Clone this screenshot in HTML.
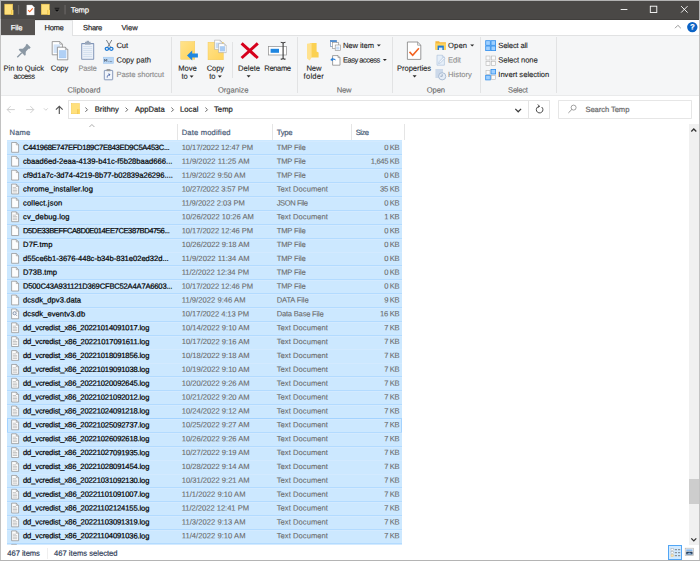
<!DOCTYPE html>
<html lang="en"><head><meta charset="utf-8"><title>Temp</title>
<style>
html,body{margin:0;padding:0;background:#fff;}
body{width:700px;height:561px;overflow:hidden;position:relative;font-family:"Liberation Sans", sans-serif;font-size:7.6px;}
#win{position:absolute;left:0;top:0;width:700px;height:561px;overflow:hidden;background:#fff;}
#win div,#win svg,#win span{position:absolute;}
#win span{white-space:nowrap;line-height:10px;height:10px;transform-origin:0 50%;-webkit-text-stroke:0.22px;}
#win svg{overflow:visible;}
</style></head><body><div id="win">
<div style="left:0.00px;top:0.00px;width:700.00px;height:561.00px;background:#fff;"></div>
<div style="left:0.00px;top:0.00px;width:700.00px;height:19.40px;background:#4a4846;"></div>
<div style="left:0.00px;top:0.00px;width:700.00px;height:1.00px;background:#b2b2b2;"></div>
<div style="left:0.00px;top:18.60px;width:700.00px;height:0.80px;background:#403e3c;"></div>
<div style="left:0.00px;top:19.40px;width:34.70px;height:15.60px;background:#555250;"></div>
<div style="left:0.00px;top:35.00px;width:700.00px;height:60.30px;background:#f5f6f7;"></div>
<div style="left:0.00px;top:34.70px;width:700.00px;height:0.70px;background:#e1e2e3;"></div>
<div style="left:0.00px;top:95.00px;width:700.00px;height:0.70px;background:#e9eaeb;"></div>
<div style="left:34.70px;top:19.90px;width:38.30px;height:15.90px;background:#f5f6f7;box-sizing:border-box;border:0.7px solid #e1e2e3;border-bottom:none;border-left:none;"></div>
<div style="left:171.05px;top:37.20px;width:0.70px;height:56.20px;background:#e2e3e4;"></div>
<div style="left:297.05px;top:37.20px;width:0.70px;height:56.20px;background:#e2e3e4;"></div>
<div style="left:392.25px;top:37.20px;width:0.70px;height:56.20px;background:#e2e3e4;"></div>
<div style="left:480.05px;top:37.20px;width:0.70px;height:56.20px;background:#e2e3e4;"></div>
<div style="left:556.35px;top:37.20px;width:0.70px;height:56.20px;background:#e2e3e4;"></div>
<div style="left:232.10px;top:42.00px;width:0.70px;height:36.00px;background:#e2e3e4;"></div>
<div style="left:68.30px;top:99.70px;width:481.60px;height:19.70px;background:#fff;box-sizing:border-box;border:0.8px solid #e4e4e4;"></div>
<div style="left:528.00px;top:99.70px;width:0.80px;height:19.70px;background:#e4e4e4;"></div>
<div style="left:558.30px;top:99.70px;width:133.60px;height:19.70px;background:#fff;box-sizing:border-box;border:0.8px solid #e6e6e6;border-radius:0.8px;"></div>
<div style="left:177.05px;top:124.30px;width:0.70px;height:15.80px;background:#e5e5e5;"></div>
<div style="left:272.05px;top:124.30px;width:0.70px;height:15.80px;background:#e5e5e5;"></div>
<div style="left:351.05px;top:124.30px;width:0.70px;height:15.80px;background:#e5e5e5;"></div>
<div style="left:403.95px;top:124.30px;width:0.70px;height:15.80px;background:#e5e5e5;"></div>
<div style="left:7.30px;top:140.40px;width:394.60px;height:404.60px;background:#cce8ff;"></div>
<div style="left:7.30px;top:140.60px;width:394.60px;height:0.80px;background:#b3dbff;"></div>
<div style="left:7.30px;top:141.40px;width:394.60px;height:0.60px;background:#d3eaff;"></div>
<div style="left:7.30px;top:154.47px;width:394.60px;height:0.80px;background:#b3dbff;"></div>
<div style="left:7.30px;top:155.27px;width:394.60px;height:0.60px;background:#d3eaff;"></div>
<div style="left:7.30px;top:168.34px;width:394.60px;height:0.80px;background:#b3dbff;"></div>
<div style="left:7.30px;top:169.14px;width:394.60px;height:0.60px;background:#d3eaff;"></div>
<div style="left:7.30px;top:182.22px;width:394.60px;height:0.80px;background:#b3dbff;"></div>
<div style="left:7.30px;top:183.02px;width:394.60px;height:0.60px;background:#d3eaff;"></div>
<div style="left:7.30px;top:196.09px;width:394.60px;height:0.80px;background:#b3dbff;"></div>
<div style="left:7.30px;top:196.89px;width:394.60px;height:0.60px;background:#d3eaff;"></div>
<div style="left:7.30px;top:209.96px;width:394.60px;height:0.80px;background:#b3dbff;"></div>
<div style="left:7.30px;top:210.76px;width:394.60px;height:0.60px;background:#d3eaff;"></div>
<div style="left:7.30px;top:223.83px;width:394.60px;height:0.80px;background:#b3dbff;"></div>
<div style="left:7.30px;top:224.63px;width:394.60px;height:0.60px;background:#d3eaff;"></div>
<div style="left:7.30px;top:237.70px;width:394.60px;height:0.80px;background:#b3dbff;"></div>
<div style="left:7.30px;top:238.50px;width:394.60px;height:0.60px;background:#d3eaff;"></div>
<div style="left:7.30px;top:251.58px;width:394.60px;height:0.80px;background:#b3dbff;"></div>
<div style="left:7.30px;top:252.38px;width:394.60px;height:0.60px;background:#d3eaff;"></div>
<div style="left:7.30px;top:265.45px;width:394.60px;height:0.80px;background:#b3dbff;"></div>
<div style="left:7.30px;top:266.25px;width:394.60px;height:0.60px;background:#d3eaff;"></div>
<div style="left:7.30px;top:279.32px;width:394.60px;height:0.80px;background:#b3dbff;"></div>
<div style="left:7.30px;top:280.12px;width:394.60px;height:0.60px;background:#d3eaff;"></div>
<div style="left:7.30px;top:293.19px;width:394.60px;height:0.80px;background:#b3dbff;"></div>
<div style="left:7.30px;top:293.99px;width:394.60px;height:0.60px;background:#d3eaff;"></div>
<div style="left:7.30px;top:307.06px;width:394.60px;height:0.80px;background:#b3dbff;"></div>
<div style="left:7.30px;top:307.86px;width:394.60px;height:0.60px;background:#d3eaff;"></div>
<div style="left:7.30px;top:320.94px;width:394.60px;height:0.80px;background:#b3dbff;"></div>
<div style="left:7.30px;top:321.74px;width:394.60px;height:0.60px;background:#d3eaff;"></div>
<div style="left:7.30px;top:334.81px;width:394.60px;height:0.80px;background:#b3dbff;"></div>
<div style="left:7.30px;top:335.61px;width:394.60px;height:0.60px;background:#d3eaff;"></div>
<div style="left:7.30px;top:348.68px;width:394.60px;height:0.80px;background:#b3dbff;"></div>
<div style="left:7.30px;top:349.48px;width:394.60px;height:0.60px;background:#d3eaff;"></div>
<div style="left:7.30px;top:362.55px;width:394.60px;height:0.80px;background:#b3dbff;"></div>
<div style="left:7.30px;top:363.35px;width:394.60px;height:0.60px;background:#d3eaff;"></div>
<div style="left:7.30px;top:376.42px;width:394.60px;height:0.80px;background:#b3dbff;"></div>
<div style="left:7.30px;top:377.22px;width:394.60px;height:0.60px;background:#d3eaff;"></div>
<div style="left:7.30px;top:390.30px;width:394.60px;height:0.80px;background:#b3dbff;"></div>
<div style="left:7.30px;top:391.10px;width:394.60px;height:0.60px;background:#d3eaff;"></div>
<div style="left:7.30px;top:404.17px;width:394.60px;height:0.80px;background:#b3dbff;"></div>
<div style="left:7.30px;top:404.97px;width:394.60px;height:0.60px;background:#d3eaff;"></div>
<div style="left:7.30px;top:418.04px;width:394.60px;height:0.80px;background:#b3dbff;"></div>
<div style="left:7.30px;top:418.84px;width:394.60px;height:0.60px;background:#d3eaff;"></div>
<div style="left:7.30px;top:417.94px;width:394.60px;height:14.77px;background:transparent;box-sizing:border-box;border:0.9px solid #a4d3ff;"></div>
<div style="left:7.30px;top:431.91px;width:394.60px;height:0.80px;background:#b3dbff;"></div>
<div style="left:7.30px;top:432.71px;width:394.60px;height:0.60px;background:#d3eaff;"></div>
<div style="left:7.30px;top:445.78px;width:394.60px;height:0.80px;background:#b3dbff;"></div>
<div style="left:7.30px;top:446.58px;width:394.60px;height:0.60px;background:#d3eaff;"></div>
<div style="left:7.30px;top:459.66px;width:394.60px;height:0.80px;background:#b3dbff;"></div>
<div style="left:7.30px;top:460.46px;width:394.60px;height:0.60px;background:#d3eaff;"></div>
<div style="left:7.30px;top:473.53px;width:394.60px;height:0.80px;background:#b3dbff;"></div>
<div style="left:7.30px;top:474.33px;width:394.60px;height:0.60px;background:#d3eaff;"></div>
<div style="left:7.30px;top:487.40px;width:394.60px;height:0.80px;background:#b3dbff;"></div>
<div style="left:7.30px;top:488.20px;width:394.60px;height:0.60px;background:#d3eaff;"></div>
<div style="left:7.30px;top:501.27px;width:394.60px;height:0.80px;background:#b3dbff;"></div>
<div style="left:7.30px;top:502.07px;width:394.60px;height:0.60px;background:#d3eaff;"></div>
<div style="left:7.30px;top:515.14px;width:394.60px;height:0.80px;background:#b3dbff;"></div>
<div style="left:7.30px;top:515.94px;width:394.60px;height:0.60px;background:#d3eaff;"></div>
<div style="left:7.30px;top:529.02px;width:394.60px;height:0.80px;background:#b3dbff;"></div>
<div style="left:7.30px;top:529.82px;width:394.60px;height:0.60px;background:#d3eaff;"></div>
<div style="left:7.30px;top:542.89px;width:394.60px;height:0.80px;background:#b3dbff;"></div>
<div style="left:7.30px;top:543.69px;width:394.60px;height:0.60px;background:#d3eaff;"></div>
<div style="left:689.00px;top:124.00px;width:10.00px;height:420.80px;background:#f0f0f0;"></div>
<div style="left:689.00px;top:478.90px;width:10.00px;height:25.20px;background:#cdcdcd;"></div>
<div style="left:0.00px;top:545.00px;width:700.00px;height:15.50px;background:#fff;"></div>
<div style="left:46.80px;top:547.50px;width:0.60px;height:11.00px;background:#efefef;"></div>
<div style="left:667.60px;top:545.00px;width:14.40px;height:15.20px;background:#d2eaff;box-sizing:border-box;border:0.75px solid #52a6f5;"></div>
<div style="left:0.00px;top:19.40px;width:0.90px;height:541.60px;background:#c2c2c2;"></div>
<div style="left:0.00px;top:0.00px;width:0.90px;height:19.40px;background:#b0b0b0;"></div>
<div style="left:698.90px;top:19.40px;width:1.10px;height:541.60px;background:#c2c2c2;"></div>
<div style="left:698.90px;top:0.00px;width:1.10px;height:19.40px;background:#b4b4b4;"></div>
<div style="left:0.00px;top:559.70px;width:700.00px;height:1.30px;background:#b4b4b4;"></div>
<svg style="left:0;top:0" width="700" height="561" viewBox="0 0 700 561"><path d="M189.60 75.50h4.0l-2.00 2.2z" fill="#2a2a2a"/><path d="M217.80 75.50h4.0l-2.00 2.2z" fill="#2a2a2a"/><path d="M246.60 75.30h4.0l-2.00 2.2z" fill="#2a2a2a"/><path d="M412.60 75.30h4.0l-2.00 2.2z" fill="#2a2a2a"/><path d="M376.80 44.40h4.0l-2.00 2.2z" fill="#2a2a2a"/><path d="M382.80 58.90h4.0l-2.00 2.2z" fill="#2a2a2a"/><path d="M470.20 44.40h4.0l-2.00 2.2z" fill="#2a2a2a"/><rect x="4.75" y="4.15" width="8.00" height="10.40" fill="#ffe07c" stroke="#f4c84a" stroke-width=".5"/><rect x="11.10" y="9.90" width="2.3" height="4.9" fill="#ffdb66"/><rect x="11.00" y="9.90" width=".55" height="4.9" fill="#e3b43a"/><rect x="41.25" y="4.15" width="8.00" height="10.40" fill="#ffe07c" stroke="#f4c84a" stroke-width=".5"/><rect x="47.60" y="9.90" width="2.3" height="4.9" fill="#ffdb66"/><rect x="47.50" y="9.90" width=".55" height="4.9" fill="#e3b43a"/><rect x="17.9" y="5" width="1.3" height="9.4" fill="#666361"/><rect x="64.4" y="5" width="1.3" height="9.4" fill="#666361"/><path d="M26.8 5.1h5.2l2.2 2.2v7.6h-7.4z" fill="#fff" stroke="#d8d8d8" stroke-width=".4"/><path d="M28.2 10.2l1.5 1.6l3-3.4" fill="none" stroke="#f26322" stroke-width="1.1"/><rect x="54.7" y="8.5" width="4.7" height="0.8" fill="#8a8886" opacity=".7"/><path d="M54.9 10.5h4.4l-2.2 2.1z" fill="#8a8886" opacity=".6"/><rect x="54.6" y="7.8" width="4.8" height="0.9" fill="#0a0a0a"/><path d="M54.6 9.6h4.8l-2.4 2.4z" fill="#0a0a0a"/><path d="M620.7 9.5h6.7" stroke="#fff" stroke-width=".9"/><rect x="650.3" y="6.2" width="6.5" height="6.3" fill="none" stroke="#fff" stroke-width=".9"/><path d="M681.1 6.1l6.5 6.5M687.6 6.1l-6.5 6.5" stroke="#fff" stroke-width=".9"/><path d="M675 28.2l2.9-2.9l2.9 2.9" fill="none" stroke="#8d8d8d" stroke-width=".9"/><circle cx="692.3" cy="27.1" r="5.2" fill="#0b63c5"/><g transform="translate(22.5 52.0) rotate(45)" fill="#8b98a4"><rect x="-2.7" y="-9.0" width="5.4" height="2.2" rx=".4"/><rect x="-2.0" y="-7.2" width="4.0" height="5.4"/><path d="M-2.0 -2.6h4.0l2.3 2.4v1.3h-8.6v-1.3z"/><rect x="-0.65" y="1" width="1.3" height="6.4"/></g><path d="M52.2 41.6h7.60l2.6 2.6v10.60h-10.2z" fill="#fff" stroke="#868686" stroke-width="0.8"/><path d="M59.80 41.6v2.6h2.6" fill="none" stroke="#868686" stroke-width="0.64"/><rect x="53.6" y="44.4" width="6.6" height="8.6" fill="#d3e4f8"/><path d="M57.4 47.2h8.00l2.4 2.4v10.20h-10.4z" fill="#fff" stroke="#868686" stroke-width="0.8"/><path d="M65.40 47.2v2.4h2.4" fill="none" stroke="#868686" stroke-width="0.64"/><rect x="58.9" y="50.2" width="7.4" height="8.0" fill="#a9cbf3"/><path d="M58.9 52h7.4M58.9 54h7.4M58.9 56h7.4" stroke="#c4dcf8" stroke-width=".5"/><rect x="81.2" y="43.0" width="13.0" height="16.8" rx=".8" fill="#8296b8"/><rect x="82.2" y="44.2" width="11.0" height="14.6" fill="#eef3fa"/><path d="M83.2 46.6h9M83.2 48.6h9M83.2 50.6h9M83.2 52.6h9M83.2 54.6h9M83.2 56.6h9" stroke="#c6d5ea" stroke-width=".7"/><rect x="85.0" y="41.8" width="5.6" height="2.8" fill="#9aa7ba"/><rect x="86.6" y="40.8" width="2.4" height="1.6" fill="#9aa7ba"/><path d="M106.4 40.0l4.4 7.6M111.8 40.0l-4.4 7.6" stroke="#7d8288" stroke-width="1" fill="none"/><ellipse cx="106.9" cy="48.8" rx="1.7" ry="1.5" fill="none" stroke="#1c7ad6" stroke-width="1.3"/><ellipse cx="111.3" cy="48.8" rx="1.7" ry="1.5" fill="none" stroke="#1c7ad6" stroke-width="1.3"/><rect x="103.3" y="57.2" width="10.2" height="6.3" fill="#b9d7f6" stroke="#9cc3ee" stroke-width=".5"/><path d="M104.6 61.8v-2.6l1.1 1.6l1.1-1.6v2.6" fill="none" stroke="#39424f" stroke-width=".6"/><path d="M108.6 61.6h.7M110 61.6h.7M111.4 61.6h.7" stroke="#39424f" stroke-width=".7"/><rect x="104.3" y="70.4" width="8.4" height="9.4" rx=".5" fill="#f1f5fb" stroke="#7b90b2" stroke-width=".9"/><rect x="106.6" y="69.0" width="3.8" height="2.2" fill="#9a9a9a"/><path d="M107.2 77.6c0-2 .8-2.9 2.6-2.9M108.6 73.6l1.4 1.1l-1.2 1.2" fill="none" stroke="#35539a" stroke-width=".8"/><defs><linearGradient id="fy" x1="0" y1="0" x2="1" y2="1"><stop offset="0" stop-color="#ffe28c"/><stop offset="1" stop-color="#ffd45c"/></linearGradient></defs><rect x="180.8" y="41.5" width="14.0" height="17.8" fill="url(#fy)" stroke="#f3c650" stroke-width=".4"/><path d="M187.0 55.5l5.2-5.0v3.0h5.7v4.0h-5.7v3.0z" fill="#1e86e0"/><rect x="208.0" y="42.2" width="15.4" height="17.6" fill="url(#fy)" stroke="#f3c650" stroke-width=".4"/><path d="M214.6 40.2h5.60l1.8 1.8v7.40h-7.4z" fill="#fff" stroke="#9a9a9a" stroke-width="0.5"/><path d="M220.20 40.2v1.8h1.8" fill="none" stroke="#9a9a9a" stroke-width="0.40"/><rect x="215.7" y="42.6" width="5.0" height="5.6" fill="#c7dcf5"/><path d="M218.6 43.6h5.80l1.8 1.8v7.20h-7.6z" fill="#fff" stroke="#9a9a9a" stroke-width="0.5"/><path d="M224.40 43.6v1.8h1.8" fill="none" stroke="#9a9a9a" stroke-width="0.40"/><rect x="219.8" y="46.2" width="5.2" height="5.2" fill="#a9cbf3"/><path d="M241.6 43.4l16.2 14.6M257.8 43.4l-16.2 14.6" stroke="#d6001c" stroke-width="3.0" fill="none"/><rect x="268.4" y="46.6" width="18.1" height="8.4" fill="#fff" stroke="#8c8c8c" stroke-width=".7"/><rect x="270.6" y="48.8" width="8.4" height="4.0" fill="#1e86e0"/><path d="M283.1 42.6v16.2M280.7 42.3c1.4 0 2.4.3 2.4 1.2c0-.9 1-1.2 2.4-1.2M280.7 59.1c1.4 0 2.4-.3 2.4-1.2c0 .9 1 1.2 2.4 1.2" fill="none" stroke="#3a3a3a" stroke-width="1.1"/><path d="M310.0 43.0h6.6v8.6l2.0 1.0v5.0h-8.6z" fill="#fbd152"/><path d="M307.0 43.8l4.6-0.8v14.6l-1.9 2.8l-2.7-1.8z" fill="#ffe28f"/><rect x="330.4" y="40.4" width="6.2" height="6.0" fill="#fff" stroke="#5b7fae" stroke-width=".6"/><rect x="330.4" y="40.4" width="6.2" height="1.5" fill="#3b82d0"/><rect x="332.4" y="42.6" width="6.0" height="6.0" fill="#fff" stroke="#8c8c8c" stroke-width=".6"/><rect x="335.2" y="45.0" width="5.2" height="5.6" fill="#fff" stroke="#8c8c8c" stroke-width=".6"/><rect x="336.2" y="46.6" width="3.2" height="3.0" fill="#c7dcf5"/><path d="M332.6 55.6h5.40l2.0 2.0v7.60h-7.4z" fill="#fff" stroke="#7c7c7c" stroke-width="0.7"/><path d="M338.00 55.6v2.0h2.0" fill="none" stroke="#7c7c7c" stroke-width="0.56"/><path d="M330.2 60.0l2.6-2.8l.1 1.4c1.6 0 2.6.6 3 1.9c-.9-.7-1.9-.8-3-.7l-.1 1.5z" fill="#2b7fd6"/><path d="M407.4 42.0h10.20l3.2 3.2v14.20h-13.4z" fill="#fff" stroke="#808080" stroke-width="0.8"/><path d="M417.60 42.0v3.2h3.2" fill="none" stroke="#808080" stroke-width="0.64"/><path d="M409.5 51.9l3.2 3.3l6.2-7.0" fill="none" stroke="#f26322" stroke-width="1.6"/><path d="M435.4 41.2h3.6l.9 1h6v7.6h-10.5z" fill="#f5b73a"/><rect x="435.4" y="43.4" width="10.5" height="6.4" fill="#ffd45e"/><rect x="437.6" y="45.6" width="6.2" height="4.4" fill="#1e7ad6"/><rect x="439.0" y="47.6" width="3.4" height="2.4" fill="#fff" opacity=".85"/><path d="M437.0 55.2h5.40l2.0 2.0v8.00h-7.4z" fill="#e6eff9" stroke="#b3c6de" stroke-width="0.7"/><path d="M442.40 55.2v2.0h2.0" fill="none" stroke="#b3c6de" stroke-width="0.56"/><path d="M438.6 63.6l.6-2l4.4-4.6l1.3 1.3l-4.4 4.6z" fill="#f2f6fb" stroke="#a5bad6" stroke-width=".6"/><rect x="435.4" y="69.0" width="7.6" height="9.0" fill="#ccd9ea"/><circle cx="442.2" cy="76.3" r="3.6" fill="#e6edf6" stroke="#9db1cb" stroke-width=".8"/><path d="M442.2 74.2v2.1h-1.9" fill="none" stroke="#8298b6" stroke-width=".7"/><rect x="485.7" y="40.7" width="4.6" height="4.6" fill="#9fd0ff" stroke="#2d8ceb" stroke-width=".8"/><rect x="491.0" y="40.7" width="4.6" height="4.6" fill="#9fd0ff" stroke="#2d8ceb" stroke-width=".8"/><rect x="485.7" y="46.0" width="4.6" height="4.6" fill="#9fd0ff" stroke="#2d8ceb" stroke-width=".8"/><rect x="491.0" y="46.0" width="4.6" height="4.6" fill="#9fd0ff" stroke="#2d8ceb" stroke-width=".8"/><rect x="486.0" y="56.0" width="4.0" height="4.0" fill="#fbfbfb" stroke="#b5b5b5" stroke-width=".6"/><rect x="491.4" y="56.0" width="4.0" height="4.0" fill="#fbfbfb" stroke="#b5b5b5" stroke-width=".6"/><rect x="486.0" y="61.300000000000004" width="4.0" height="4.0" fill="#fbfbfb" stroke="#b5b5b5" stroke-width=".6"/><rect x="491.4" y="61.300000000000004" width="4.0" height="4.0" fill="#fbfbfb" stroke="#b5b5b5" stroke-width=".6"/><rect x="486.0" y="70.3" width="4.0" height="4.0" fill="#fbfbfb" stroke="#b5b5b5" stroke-width=".6"/><rect x="491.0" y="69.4" width="4.6" height="4.6" fill="#9fd0ff" stroke="#2d8ceb" stroke-width=".8"/><rect x="485.7" y="75.3" width="4.6" height="4.6" fill="#9fd0ff" stroke="#2d8ceb" stroke-width=".8"/><rect x="491.4" y="75.6" width="4.0" height="4.0" fill="#fbfbfb" stroke="#b5b5b5" stroke-width=".6"/><path d="M7.2 109.6h7.6M10.6 106.2l-3.4 3.4l3.4 3.4" fill="none" stroke="#c9c9c9" stroke-width=".9"/><path d="M26.2 109.6h7.6M30.4 106.2l3.4 3.4l-3.4 3.4" fill="none" stroke="#c9c9c9" stroke-width=".9"/><path d="M43.9 108.3l1.95 1.95l1.95-1.95" fill="none" stroke="#c6c6c6" stroke-width=".8"/><path d="M59.3 113.9v-7.4M55.9 109.7l3.4-3.4l3.4 3.4" fill="none" stroke="#555" stroke-width="1.15"/><rect x="71.35" y="103.55" width="8.00" height="10.20" fill="#ffe07c" stroke="#f4c84a" stroke-width=".5"/><rect x="77.70" y="109.10" width="2.3" height="4.9" fill="#ffdb66"/><rect x="77.60" y="109.10" width=".55" height="4.9" fill="#e3b43a"/><path d="M85.4 107.60000000000001l2.1 2.1l-2.1 2.1" fill="none" stroke="#555" stroke-width=".9"/><path d="M125.6 107.60000000000001l2.1 2.1l-2.1 2.1" fill="none" stroke="#555" stroke-width=".9"/><path d="M171.4 107.60000000000001l2.1 2.1l-2.1 2.1" fill="none" stroke="#555" stroke-width=".9"/><path d="M205.4 107.60000000000001l2.1 2.1l-2.1 2.1" fill="none" stroke="#555" stroke-width=".9"/><path d="M515.3 108.9l2.9 2.9l2.9-2.9" fill="none" stroke="#3c3c3c" stroke-width="1.25"/><path d="M541.6 107.0a3.3 3.3 0 1 1 -2.6 -0.6" fill="none" stroke="#4a4a4a" stroke-width="1.0"/><path d="M537.6 104.6l2.2 1.7l-2.1 1.3" fill="none" stroke="#4a4a4a" stroke-width=".9"/><circle cx="573.6" cy="107.6" r="2.5" fill="none" stroke="#7a7a7a" stroke-width=".7"/><path d="M571.8 109.5l-3.4 3.4" stroke="#7a7a7a" stroke-width=".8"/><path d="M89.4 127.0l2.5-2.5l2.5 2.5" fill="none" stroke="#8a8a8a" stroke-width=".7"/><path d="M11.6 142.50h4.7l2.3 2.3v7.5h-7.0z" fill="#fdfdfd" stroke="#8d8d8d" stroke-width=".7"/><path d="M16.30 142.50v2.3h2.3" fill="none" stroke="#8d8d8d" stroke-width=".6"/><path d="M11.6 156.37h4.7l2.3 2.3v7.5h-7.0z" fill="#fdfdfd" stroke="#8d8d8d" stroke-width=".7"/><path d="M16.30 156.37v2.3h2.3" fill="none" stroke="#8d8d8d" stroke-width=".6"/><path d="M11.6 170.24h4.7l2.3 2.3v7.5h-7.0z" fill="#fdfdfd" stroke="#8d8d8d" stroke-width=".7"/><path d="M16.30 170.24v2.3h2.3" fill="none" stroke="#8d8d8d" stroke-width=".6"/><path d="M11.6 184.12h4.7l2.3 2.3v7.5h-7.0z" fill="#fdfdfd" stroke="#8d8d8d" stroke-width=".7"/><path d="M16.30 184.12v2.3h2.3" fill="none" stroke="#8d8d8d" stroke-width=".6"/><path d="M12.80 187.42h3.2M12.80 188.92h4.4M12.80 190.42h4.4M12.80 191.92h4.4" stroke="#c4c4c4" stroke-width=".95"/><path d="M11.6 197.99h4.7l2.3 2.3v7.5h-7.0z" fill="#fdfdfd" stroke="#8d8d8d" stroke-width=".7"/><path d="M16.30 197.99v2.3h2.3" fill="none" stroke="#8d8d8d" stroke-width=".6"/><path d="M11.6 211.86h4.7l2.3 2.3v7.5h-7.0z" fill="#fdfdfd" stroke="#8d8d8d" stroke-width=".7"/><path d="M16.30 211.86v2.3h2.3" fill="none" stroke="#8d8d8d" stroke-width=".6"/><path d="M12.80 215.16h3.2M12.80 216.66h4.4M12.80 218.16h4.4M12.80 219.66h4.4" stroke="#c4c4c4" stroke-width=".95"/><path d="M11.6 225.73h4.7l2.3 2.3v7.5h-7.0z" fill="#fdfdfd" stroke="#8d8d8d" stroke-width=".7"/><path d="M16.30 225.73v2.3h2.3" fill="none" stroke="#8d8d8d" stroke-width=".6"/><path d="M11.6 239.60h4.7l2.3 2.3v7.5h-7.0z" fill="#fdfdfd" stroke="#8d8d8d" stroke-width=".7"/><path d="M16.30 239.60v2.3h2.3" fill="none" stroke="#8d8d8d" stroke-width=".6"/><path d="M11.6 253.48h4.7l2.3 2.3v7.5h-7.0z" fill="#fdfdfd" stroke="#8d8d8d" stroke-width=".7"/><path d="M16.30 253.48v2.3h2.3" fill="none" stroke="#8d8d8d" stroke-width=".6"/><path d="M11.6 267.35h4.7l2.3 2.3v7.5h-7.0z" fill="#fdfdfd" stroke="#8d8d8d" stroke-width=".7"/><path d="M16.30 267.35v2.3h2.3" fill="none" stroke="#8d8d8d" stroke-width=".6"/><path d="M11.6 281.22h4.7l2.3 2.3v7.5h-7.0z" fill="#fdfdfd" stroke="#8d8d8d" stroke-width=".7"/><path d="M16.30 281.22v2.3h2.3" fill="none" stroke="#8d8d8d" stroke-width=".6"/><path d="M11.6 295.09h4.7l2.3 2.3v7.5h-7.0z" fill="#fdfdfd" stroke="#8d8d8d" stroke-width=".7"/><path d="M16.30 295.09v2.3h2.3" fill="none" stroke="#8d8d8d" stroke-width=".6"/><path d="M11.6 308.96h4.7l2.3 2.3v7.5h-7.0z" fill="#fdfdfd" stroke="#8d8d8d" stroke-width=".7"/><path d="M16.30 308.96v2.3h2.3" fill="none" stroke="#8d8d8d" stroke-width=".6"/><circle cx="14.60" cy="313.26" r="1.6" fill="#eef2f8" stroke="#7f8ea6" stroke-width=".9"/><path d="M15.60 314.46l1.6 1.6" stroke="#8e9bb0" stroke-width=".8"/><path d="M11.6 322.84h4.7l2.3 2.3v7.5h-7.0z" fill="#fdfdfd" stroke="#8d8d8d" stroke-width=".7"/><path d="M16.30 322.84v2.3h2.3" fill="none" stroke="#8d8d8d" stroke-width=".6"/><path d="M12.80 326.14h3.2M12.80 327.64h4.4M12.80 329.14h4.4M12.80 330.64h4.4" stroke="#c4c4c4" stroke-width=".95"/><path d="M11.6 336.71h4.7l2.3 2.3v7.5h-7.0z" fill="#fdfdfd" stroke="#8d8d8d" stroke-width=".7"/><path d="M16.30 336.71v2.3h2.3" fill="none" stroke="#8d8d8d" stroke-width=".6"/><path d="M12.80 340.01h3.2M12.80 341.51h4.4M12.80 343.01h4.4M12.80 344.51h4.4" stroke="#c4c4c4" stroke-width=".95"/><path d="M11.6 350.58h4.7l2.3 2.3v7.5h-7.0z" fill="#fdfdfd" stroke="#8d8d8d" stroke-width=".7"/><path d="M16.30 350.58v2.3h2.3" fill="none" stroke="#8d8d8d" stroke-width=".6"/><path d="M12.80 353.88h3.2M12.80 355.38h4.4M12.80 356.88h4.4M12.80 358.38h4.4" stroke="#c4c4c4" stroke-width=".95"/><path d="M11.6 364.45h4.7l2.3 2.3v7.5h-7.0z" fill="#fdfdfd" stroke="#8d8d8d" stroke-width=".7"/><path d="M16.30 364.45v2.3h2.3" fill="none" stroke="#8d8d8d" stroke-width=".6"/><path d="M12.80 367.75h3.2M12.80 369.25h4.4M12.80 370.75h4.4M12.80 372.25h4.4" stroke="#c4c4c4" stroke-width=".95"/><path d="M11.6 378.32h4.7l2.3 2.3v7.5h-7.0z" fill="#fdfdfd" stroke="#8d8d8d" stroke-width=".7"/><path d="M16.30 378.32v2.3h2.3" fill="none" stroke="#8d8d8d" stroke-width=".6"/><path d="M12.80 381.62h3.2M12.80 383.12h4.4M12.80 384.62h4.4M12.80 386.12h4.4" stroke="#c4c4c4" stroke-width=".95"/><path d="M11.6 392.20h4.7l2.3 2.3v7.5h-7.0z" fill="#fdfdfd" stroke="#8d8d8d" stroke-width=".7"/><path d="M16.30 392.20v2.3h2.3" fill="none" stroke="#8d8d8d" stroke-width=".6"/><path d="M12.80 395.50h3.2M12.80 397.00h4.4M12.80 398.50h4.4M12.80 400.00h4.4" stroke="#c4c4c4" stroke-width=".95"/><path d="M11.6 406.07h4.7l2.3 2.3v7.5h-7.0z" fill="#fdfdfd" stroke="#8d8d8d" stroke-width=".7"/><path d="M16.30 406.07v2.3h2.3" fill="none" stroke="#8d8d8d" stroke-width=".6"/><path d="M12.80 409.37h3.2M12.80 410.87h4.4M12.80 412.37h4.4M12.80 413.87h4.4" stroke="#c4c4c4" stroke-width=".95"/><path d="M11.6 419.94h4.7l2.3 2.3v7.5h-7.0z" fill="#fdfdfd" stroke="#8d8d8d" stroke-width=".7"/><path d="M16.30 419.94v2.3h2.3" fill="none" stroke="#8d8d8d" stroke-width=".6"/><path d="M12.80 423.24h3.2M12.80 424.74h4.4M12.80 426.24h4.4M12.80 427.74h4.4" stroke="#c4c4c4" stroke-width=".95"/><path d="M11.6 433.81h4.7l2.3 2.3v7.5h-7.0z" fill="#fdfdfd" stroke="#8d8d8d" stroke-width=".7"/><path d="M16.30 433.81v2.3h2.3" fill="none" stroke="#8d8d8d" stroke-width=".6"/><path d="M12.80 437.11h3.2M12.80 438.61h4.4M12.80 440.11h4.4M12.80 441.61h4.4" stroke="#c4c4c4" stroke-width=".95"/><path d="M11.6 447.68h4.7l2.3 2.3v7.5h-7.0z" fill="#fdfdfd" stroke="#8d8d8d" stroke-width=".7"/><path d="M16.30 447.68v2.3h2.3" fill="none" stroke="#8d8d8d" stroke-width=".6"/><path d="M12.80 450.98h3.2M12.80 452.48h4.4M12.80 453.98h4.4M12.80 455.48h4.4" stroke="#c4c4c4" stroke-width=".95"/><path d="M11.6 461.56h4.7l2.3 2.3v7.5h-7.0z" fill="#fdfdfd" stroke="#8d8d8d" stroke-width=".7"/><path d="M16.30 461.56v2.3h2.3" fill="none" stroke="#8d8d8d" stroke-width=".6"/><path d="M12.80 464.86h3.2M12.80 466.36h4.4M12.80 467.86h4.4M12.80 469.36h4.4" stroke="#c4c4c4" stroke-width=".95"/><path d="M11.6 475.43h4.7l2.3 2.3v7.5h-7.0z" fill="#fdfdfd" stroke="#8d8d8d" stroke-width=".7"/><path d="M16.30 475.43v2.3h2.3" fill="none" stroke="#8d8d8d" stroke-width=".6"/><path d="M12.80 478.73h3.2M12.80 480.23h4.4M12.80 481.73h4.4M12.80 483.23h4.4" stroke="#c4c4c4" stroke-width=".95"/><path d="M11.6 489.30h4.7l2.3 2.3v7.5h-7.0z" fill="#fdfdfd" stroke="#8d8d8d" stroke-width=".7"/><path d="M16.30 489.30v2.3h2.3" fill="none" stroke="#8d8d8d" stroke-width=".6"/><path d="M12.80 492.60h3.2M12.80 494.10h4.4M12.80 495.60h4.4M12.80 497.10h4.4" stroke="#c4c4c4" stroke-width=".95"/><path d="M11.6 503.17h4.7l2.3 2.3v7.5h-7.0z" fill="#fdfdfd" stroke="#8d8d8d" stroke-width=".7"/><path d="M16.30 503.17v2.3h2.3" fill="none" stroke="#8d8d8d" stroke-width=".6"/><path d="M12.80 506.47h3.2M12.80 507.97h4.4M12.80 509.47h4.4M12.80 510.97h4.4" stroke="#c4c4c4" stroke-width=".95"/><path d="M11.6 517.04h4.7l2.3 2.3v7.5h-7.0z" fill="#fdfdfd" stroke="#8d8d8d" stroke-width=".7"/><path d="M16.30 517.04v2.3h2.3" fill="none" stroke="#8d8d8d" stroke-width=".6"/><path d="M12.80 520.34h3.2M12.80 521.84h4.4M12.80 523.34h4.4M12.80 524.84h4.4" stroke="#c4c4c4" stroke-width=".95"/><path d="M11.6 530.92h4.7l2.3 2.3v7.5h-7.0z" fill="#fdfdfd" stroke="#8d8d8d" stroke-width=".7"/><path d="M16.30 530.92v2.3h2.3" fill="none" stroke="#8d8d8d" stroke-width=".6"/><path d="M12.80 534.22h3.2M12.80 535.72h4.4M12.80 537.22h4.4M12.80 538.72h4.4" stroke="#c4c4c4" stroke-width=".95"/><path d="M11.7 545v-0.6h4.6l.6.6" fill="none" stroke="#9b9b9b" stroke-width=".6"/><path d="M691.3 131.5l2.5-2.5l2.5 2.5" fill="none" stroke="#333" stroke-width="1.3"/><path d="M691.3 538.4l2.5 2.5l2.5-2.5" fill="none" stroke="#333" stroke-width="1.3"/><rect x="671.0" y="548.6" width="2.6" height="2.2" fill="#fff" stroke="#9a9a9a" stroke-width=".4"/><rect x="671.0" y="551.6" width="2.6" height="2.2" fill="#fff" stroke="#9a9a9a" stroke-width=".4"/><rect x="671.0" y="554.6" width="2.6" height="2.2" fill="#ffe2ad" stroke="#cdb88a" stroke-width=".4"/><path d="M674.8 549.7h2.2M678 549.7h2.2M674.8 552.7h2.2M678 552.7h2.2M674.8 555.7h2.2M678 555.7h2.2" stroke="#555" stroke-width=".7"/><rect x="685.2" y="548.2" width="8.4" height="7.4" fill="#fff" stroke="#a9a9a9" stroke-width=".6"/><rect x="686.2" y="549.6" width="6.4" height="1.0" fill="#3c8be0"/><rect x="686.2" y="551.6" width="6.4" height="3.0" fill="#26415f"/><path d="M686.2 554.6l3-2.2l3.4 2.2z" fill="#8fb4dc"/></svg>
<span style="top:5px;left:70px;color:#ffffff;transform:translate(0.70px,0.40px) rotate(0.03deg);letter-spacing:-0.096px;">Temp</span>
<span style="top:23px;left:10px;color:#ffffff;transform:translate(0.70px,0.20px) rotate(0.03deg);letter-spacing:-0.139px;">File</span>
<span style="top:23px;left:44px;color:#2b2b2b;transform:translate(0.50px,0.20px) rotate(0.03deg);letter-spacing:-0.318px;">Home</span>
<span style="top:23px;left:83px;color:#2b2b2b;transform:translate(0.10px,0.20px) rotate(0.03deg);letter-spacing:-0.254px;">Share</span>
<span style="top:23px;left:121px;color:#2b2b2b;transform:translate(0.40px,0.20px) rotate(0.03deg);letter-spacing:0.042px;">View</span>
<span style="top:63px;left:3px;color:#1f1f1f;transform:translate(0.50px,0.70px) rotate(0.03deg);letter-spacing:-0.038px;-webkit-text-stroke:0.12px;">Pin to Quick</span>
<span style="top:71px;left:13px;color:#1f1f1f;transform:translate(0.50px,0.80px) rotate(0.03deg);letter-spacing:-0.441px;-webkit-text-stroke:0.12px;">access</span>
<span style="top:63px;left:50px;color:#1f1f1f;transform:translate(0.70px,0.70px) rotate(0.03deg);letter-spacing:-0.035px;-webkit-text-stroke:0.12px;">Copy</span>
<span style="top:63px;left:78px;color:#8c8c8c;transform:translate(0.60px,0.70px) rotate(0.03deg);letter-spacing:-0.325px;-webkit-text-stroke:0.12px;">Paste</span>
<span style="top:40px;left:116px;color:#1f1f1f;transform:translate(0.40px,0.90px) rotate(0.03deg);letter-spacing:-0.111px;-webkit-text-stroke:0.12px;">Cut</span>
<span style="top:55px;left:116px;color:#1f1f1f;transform:translate(0.40px,0.50px) rotate(0.03deg);letter-spacing:-0.003px;-webkit-text-stroke:0.12px;">Copy path</span>
<span style="top:70px;left:116px;color:#8c8c8c;transform:translate(0.40px,0.00px) rotate(0.03deg);letter-spacing:-0.068px;-webkit-text-stroke:0.12px;">Paste shortcut</span>
<span style="top:85px;left:67px;color:#6a6a6a;transform:translate(0.40px,0.40px) rotate(0.03deg);letter-spacing:0.087px;-webkit-text-stroke:0.12px;">Clipboard</span>
<span style="top:63px;left:178px;color:#1f1f1f;transform:translate(0.30px,0.70px) rotate(0.03deg);letter-spacing:-0.046px;-webkit-text-stroke:0.12px;">Move</span>
<span style="top:71px;left:181px;color:#1f1f1f;transform:translate(0.40px,0.80px) rotate(0.03deg);letter-spacing:-0.074px;-webkit-text-stroke:0.12px;">to</span>
<span style="top:63px;left:206px;color:#1f1f1f;transform:translate(0.70px,0.70px) rotate(0.03deg);letter-spacing:-0.135px;-webkit-text-stroke:0.12px;">Copy</span>
<span style="top:71px;left:209px;color:#1f1f1f;transform:translate(0.30px,0.80px) rotate(0.03deg);letter-spacing:-0.074px;-webkit-text-stroke:0.12px;">to</span>
<span style="top:63px;left:237px;color:#1f1f1f;transform:translate(0.90px,0.70px) rotate(0.03deg);letter-spacing:0.040px;-webkit-text-stroke:0.12px;">Delete</span>
<span style="top:63px;left:264px;color:#1f1f1f;transform:translate(0.30px,0.70px) rotate(0.03deg);letter-spacing:-0.385px;-webkit-text-stroke:0.12px;">Rename</span>
<span style="top:85px;left:217px;color:#6a6a6a;transform:translate(0.90px,0.40px) rotate(0.03deg);letter-spacing:-0.017px;-webkit-text-stroke:0.12px;">Organize</span>
<span style="top:63px;left:306px;color:#1f1f1f;transform:translate(0.40px,0.70px) rotate(0.03deg);letter-spacing:-0.069px;-webkit-text-stroke:0.12px;">New</span>
<span style="top:71px;left:303px;color:#1f1f1f;transform:translate(0.60px,0.80px) rotate(0.03deg);letter-spacing:0.232px;-webkit-text-stroke:0.12px;">folder</span>
<span style="top:40px;left:342px;color:#1f1f1f;transform:translate(0.90px,0.90px) rotate(0.03deg);letter-spacing:-0.070px;-webkit-text-stroke:0.12px;">New item</span>
<span style="top:55px;left:342px;color:#1f1f1f;transform:translate(0.90px,0.50px) rotate(0.03deg);letter-spacing:-0.531px;-webkit-text-stroke:0.12px;">Easy access</span>
<span style="top:85px;left:336px;color:#6a6a6a;transform:translate(0.70px,0.40px) rotate(0.03deg);letter-spacing:-0.169px;-webkit-text-stroke:0.12px;">New</span>
<span style="top:63px;left:397px;color:#1f1f1f;transform:translate(0.10px,0.70px) rotate(0.03deg);letter-spacing:-0.073px;-webkit-text-stroke:0.12px;">Properties</span>
<span style="top:40px;left:448px;color:#1f1f1f;transform:translate(0.10px,0.90px) rotate(0.03deg);letter-spacing:0.104px;-webkit-text-stroke:0.12px;">Open</span>
<span style="top:55px;left:448px;color:#8c8c8c;transform:translate(0.10px,0.50px) rotate(0.03deg);letter-spacing:-0.125px;-webkit-text-stroke:0.12px;">Edit</span>
<span style="top:70px;left:448px;color:#8c8c8c;transform:translate(0.10px,0.00px) rotate(0.03deg);letter-spacing:0.022px;-webkit-text-stroke:0.12px;">History</span>
<span style="top:85px;left:426px;color:#6a6a6a;transform:translate(0.70px,0.40px) rotate(0.03deg);letter-spacing:-0.071px;-webkit-text-stroke:0.12px;">Open</span>
<span style="top:40px;left:498px;color:#1f1f1f;transform:translate(0.30px,0.90px) rotate(0.03deg);letter-spacing:-0.153px;-webkit-text-stroke:0.12px;">Select all</span>
<span style="top:55px;left:498px;color:#1f1f1f;transform:translate(0.30px,0.50px) rotate(0.03deg);letter-spacing:-0.074px;-webkit-text-stroke:0.12px;">Select none</span>
<span style="top:70px;left:498px;color:#1f1f1f;transform:translate(0.30px,0.00px) rotate(0.03deg);letter-spacing:-0.005px;-webkit-text-stroke:0.12px;">Invert selection</span>
<span style="top:85px;left:508px;color:#6a6a6a;transform:translate(0.10px,0.40px) rotate(0.03deg);letter-spacing:-0.269px;-webkit-text-stroke:0.12px;">Select</span>
<span style="top:22px;left:690px;color:#ffffff;transform:translate(0.10px,0.50px) rotate(0.03deg);font-size:7.8px;font-weight:700;">?</span>
<span style="top:104px;left:94px;color:#1f1f1f;transform:translate(0.70px,0.70px) rotate(0.03deg);letter-spacing:0.093px;">Brithny</span>
<span style="top:104px;left:135px;color:#1f1f1f;transform:translate(0.00px,0.70px) rotate(0.03deg);letter-spacing:0.019px;">AppData</span>
<span style="top:104px;left:180px;color:#1f1f1f;transform:translate(0.00px,0.70px) rotate(0.03deg);letter-spacing:0.088px;">Local</span>
<span style="top:104px;left:214px;color:#1f1f1f;transform:translate(0.00px,0.70px) rotate(0.03deg);letter-spacing:0.079px;">Temp</span>
<span style="top:104px;left:585px;color:#6d6d6d;transform:translate(0.40px,0.90px) rotate(0.03deg);letter-spacing:-0.065px;">Search Temp</span>
<span style="top:127px;left:9px;color:#4c607a;transform:translate(0.50px,0.90px) rotate(0.03deg);letter-spacing:0.182px;">Name</span>
<span style="top:127px;left:181px;color:#4c607a;transform:translate(0.70px,0.90px) rotate(0.03deg);letter-spacing:0.164px;">Date modified</span>
<span style="top:127px;left:276px;color:#4c607a;transform:translate(0.70px,0.90px) rotate(0.03deg);letter-spacing:-0.193px;">Type</span>
<span style="top:127px;left:355px;color:#4c607a;transform:translate(0.70px,0.90px) rotate(0.03deg);letter-spacing:-0.472px;">Size</span>
<span style="top:142px;left:23px;color:#000;transform:translate(0.00px,0.90px) rotate(0.03deg);letter-spacing:-0.322px;">C441968E747EFD189C7E843ED9C5A453C...</span>
<span style="top:142px;left:181px;color:#6a6a6a;transform:translate(0.70px,0.90px) rotate(0.03deg);letter-spacing:-0.066px;-webkit-text-stroke:0.1px;">10/17/2022 12:47 PM</span>
<span style="top:142px;left:276px;color:#6a6a6a;transform:translate(0.70px,0.90px) rotate(0.03deg);letter-spacing:-0.157px;-webkit-text-stroke:0.1px;">TMP File</span>
<span style="top:142px;left:384px;color:#6a6a6a;transform:translate(0.21px,0.90px) rotate(0.03deg);letter-spacing:-0.371px;-webkit-text-stroke:0.1px;">0 KB</span>
<span style="top:156px;left:23px;color:#000;transform:translate(0.00px,0.77px) rotate(0.03deg);letter-spacing:0.022px;">cbaad6ed-2eaa-4139-b41c-f5b28baad666...</span>
<span style="top:156px;left:181px;color:#6a6a6a;transform:translate(0.70px,0.77px) rotate(0.03deg);letter-spacing:0.063px;-webkit-text-stroke:0.1px;">11/9/2022 11:25 AM</span>
<span style="top:156px;left:276px;color:#6a6a6a;transform:translate(0.70px,0.77px) rotate(0.03deg);letter-spacing:-0.157px;-webkit-text-stroke:0.1px;">TMP File</span>
<span style="top:156px;left:370px;color:#6a6a6a;transform:translate(0.84px,0.77px) rotate(0.03deg);letter-spacing:-0.362px;-webkit-text-stroke:0.1px;">1,645 KB</span>
<span style="top:170px;left:23px;color:#000;transform:translate(0.00px,0.64px) rotate(0.03deg);letter-spacing:-0.023px;">cf9d1a7c-3d74-4219-8b77-b02839a26296....</span>
<span style="top:170px;left:181px;color:#6a6a6a;transform:translate(0.70px,0.64px) rotate(0.03deg);letter-spacing:0.041px;-webkit-text-stroke:0.1px;">11/9/2022 9:50 AM</span>
<span style="top:170px;left:276px;color:#6a6a6a;transform:translate(0.70px,0.64px) rotate(0.03deg);letter-spacing:-0.157px;-webkit-text-stroke:0.1px;">TMP File</span>
<span style="top:170px;left:384px;color:#6a6a6a;transform:translate(0.21px,0.64px) rotate(0.03deg);letter-spacing:-0.371px;-webkit-text-stroke:0.1px;">0 KB</span>
<span style="top:184px;left:23px;color:#000;transform:translate(0.00px,0.52px) rotate(0.03deg);letter-spacing:0.127px;">chrome_installer.log</span>
<span style="top:184px;left:181px;color:#6a6a6a;transform:translate(0.70px,0.52px) rotate(0.03deg);letter-spacing:-0.062px;-webkit-text-stroke:0.1px;">10/27/2022 3:57 PM</span>
<span style="top:184px;left:276px;color:#6a6a6a;transform:translate(0.70px,0.52px) rotate(0.03deg);letter-spacing:0.049px;-webkit-text-stroke:0.1px;">Text Document</span>
<span style="top:184px;left:380px;color:#6a6a6a;transform:translate(0.12px,0.52px) rotate(0.03deg);letter-spacing:-0.323px;-webkit-text-stroke:0.1px;">35 KB</span>
<span style="top:198px;left:23px;color:#000;transform:translate(0.00px,0.39px) rotate(0.03deg);letter-spacing:0.151px;">collect.json</span>
<span style="top:198px;left:181px;color:#6a6a6a;transform:translate(0.70px,0.39px) rotate(0.03deg);letter-spacing:-0.024px;-webkit-text-stroke:0.1px;">11/9/2022 2:03 PM</span>
<span style="top:198px;left:276px;color:#6a6a6a;transform:translate(0.70px,0.39px) rotate(0.03deg);letter-spacing:-0.402px;-webkit-text-stroke:0.1px;">JSON File</span>
<span style="top:198px;left:384px;color:#6a6a6a;transform:translate(0.21px,0.39px) rotate(0.03deg);letter-spacing:-0.371px;-webkit-text-stroke:0.1px;">0 KB</span>
<span style="top:212px;left:23px;color:#000;transform:translate(0.00px,0.26px) rotate(0.03deg);letter-spacing:0.126px;">cv_debug.log</span>
<span style="top:212px;left:181px;color:#6a6a6a;transform:translate(0.70px,0.26px) rotate(0.03deg);letter-spacing:-0.007px;-webkit-text-stroke:0.1px;">10/26/2022 10:26 AM</span>
<span style="top:212px;left:276px;color:#6a6a6a;transform:translate(0.70px,0.26px) rotate(0.03deg);letter-spacing:0.049px;-webkit-text-stroke:0.1px;">Text Document</span>
<span style="top:212px;left:384px;color:#6a6a6a;transform:translate(0.21px,0.26px) rotate(0.03deg);letter-spacing:-0.371px;-webkit-text-stroke:0.1px;">1 KB</span>
<span style="top:226px;left:23px;color:#000;transform:translate(0.00px,0.13px) rotate(0.03deg);letter-spacing:-0.422px;">D5DE33BEFFCA8D0E014EE7CE387BD4756...</span>
<span style="top:226px;left:181px;color:#6a6a6a;transform:translate(0.70px,0.13px) rotate(0.03deg);letter-spacing:-0.066px;-webkit-text-stroke:0.1px;">10/17/2022 12:46 PM</span>
<span style="top:226px;left:276px;color:#6a6a6a;transform:translate(0.70px,0.13px) rotate(0.03deg);letter-spacing:-0.157px;-webkit-text-stroke:0.1px;">TMP File</span>
<span style="top:226px;left:384px;color:#6a6a6a;transform:translate(0.21px,0.13px) rotate(0.03deg);letter-spacing:-0.371px;-webkit-text-stroke:0.1px;">0 KB</span>
<span style="top:240px;left:23px;color:#000;transform:translate(0.00px,0.00px) rotate(0.03deg);letter-spacing:0.202px;">D7F.tmp</span>
<span style="top:240px;left:181px;color:#6a6a6a;transform:translate(0.70px,0.00px) rotate(0.03deg);letter-spacing:0.000px;-webkit-text-stroke:0.1px;">10/26/2022 9:18 AM</span>
<span style="top:240px;left:276px;color:#6a6a6a;transform:translate(0.70px,0.00px) rotate(0.03deg);letter-spacing:-0.157px;-webkit-text-stroke:0.1px;">TMP File</span>
<span style="top:240px;left:384px;color:#6a6a6a;transform:translate(0.21px,0.00px) rotate(0.03deg);letter-spacing:-0.371px;-webkit-text-stroke:0.1px;">0 KB</span>
<span style="top:253px;left:23px;color:#000;transform:translate(0.00px,0.88px) rotate(0.03deg);letter-spacing:-0.022px;">d55ce6b1-3676-448c-b34b-831e02ed32d...</span>
<span style="top:253px;left:181px;color:#6a6a6a;transform:translate(0.70px,0.88px) rotate(0.03deg);letter-spacing:0.063px;-webkit-text-stroke:0.1px;">11/9/2022 11:34 AM</span>
<span style="top:253px;left:276px;color:#6a6a6a;transform:translate(0.70px,0.88px) rotate(0.03deg);letter-spacing:-0.157px;-webkit-text-stroke:0.1px;">TMP File</span>
<span style="top:253px;left:384px;color:#6a6a6a;transform:translate(0.21px,0.88px) rotate(0.03deg);letter-spacing:-0.371px;-webkit-text-stroke:0.1px;">0 KB</span>
<span style="top:267px;left:23px;color:#000;transform:translate(0.00px,0.75px) rotate(0.03deg);letter-spacing:0.041px;">D73B.tmp</span>
<span style="top:267px;left:181px;color:#6a6a6a;transform:translate(0.70px,0.75px) rotate(0.03deg);letter-spacing:-0.031px;-webkit-text-stroke:0.1px;">11/2/2022 12:34 PM</span>
<span style="top:267px;left:276px;color:#6a6a6a;transform:translate(0.70px,0.75px) rotate(0.03deg);letter-spacing:-0.157px;-webkit-text-stroke:0.1px;">TMP File</span>
<span style="top:267px;left:384px;color:#6a6a6a;transform:translate(0.21px,0.75px) rotate(0.03deg);letter-spacing:-0.371px;-webkit-text-stroke:0.1px;">0 KB</span>
<span style="top:281px;left:23px;color:#000;transform:translate(0.00px,0.62px) rotate(0.03deg);letter-spacing:-0.191px;">D500C43A931121D369CFBC52A4A7A6603...</span>
<span style="top:281px;left:181px;color:#6a6a6a;transform:translate(0.70px,0.62px) rotate(0.03deg);letter-spacing:-0.066px;-webkit-text-stroke:0.1px;">10/17/2022 12:46 PM</span>
<span style="top:281px;left:276px;color:#6a6a6a;transform:translate(0.70px,0.62px) rotate(0.03deg);letter-spacing:-0.157px;-webkit-text-stroke:0.1px;">TMP File</span>
<span style="top:281px;left:384px;color:#6a6a6a;transform:translate(0.21px,0.62px) rotate(0.03deg);letter-spacing:-0.371px;-webkit-text-stroke:0.1px;">0 KB</span>
<span style="top:295px;left:23px;color:#000;transform:translate(0.00px,0.49px) rotate(0.03deg);letter-spacing:0.045px;">dcsdk_dpv3.data</span>
<span style="top:295px;left:181px;color:#6a6a6a;transform:translate(0.70px,0.49px) rotate(0.03deg);letter-spacing:0.041px;-webkit-text-stroke:0.1px;">11/9/2022 9:46 AM</span>
<span style="top:295px;left:276px;color:#6a6a6a;transform:translate(0.70px,0.49px) rotate(0.03deg);letter-spacing:-0.141px;-webkit-text-stroke:0.1px;">DATA File</span>
<span style="top:295px;left:384px;color:#6a6a6a;transform:translate(0.21px,0.49px) rotate(0.03deg);letter-spacing:-0.371px;-webkit-text-stroke:0.1px;">9 KB</span>
<span style="top:309px;left:23px;color:#000;transform:translate(0.00px,0.36px) rotate(0.03deg);letter-spacing:0.061px;">dcsdk_eventv3.db</span>
<span style="top:309px;left:181px;color:#6a6a6a;transform:translate(0.70px,0.36px) rotate(0.03deg);letter-spacing:-0.062px;-webkit-text-stroke:0.1px;">10/17/2022 4:13 PM</span>
<span style="top:309px;left:276px;color:#6a6a6a;transform:translate(0.70px,0.36px) rotate(0.03deg);letter-spacing:-0.216px;-webkit-text-stroke:0.1px;">Data Base File</span>
<span style="top:309px;left:380px;color:#6a6a6a;transform:translate(0.12px,0.36px) rotate(0.03deg);letter-spacing:-0.323px;-webkit-text-stroke:0.1px;">16 KB</span>
<span style="top:323px;left:23px;color:#000;transform:translate(0.00px,0.24px) rotate(0.03deg);letter-spacing:-0.136px;">dd_vcredist_x86_20221014091017.log</span>
<span style="top:323px;left:181px;color:#6a6a6a;transform:translate(0.70px,0.24px) rotate(0.03deg);letter-spacing:0.000px;-webkit-text-stroke:0.1px;">10/14/2022 9:10 AM</span>
<span style="top:323px;left:276px;color:#6a6a6a;transform:translate(0.70px,0.24px) rotate(0.03deg);letter-spacing:0.049px;-webkit-text-stroke:0.1px;">Text Document</span>
<span style="top:323px;left:384px;color:#6a6a6a;transform:translate(0.21px,0.24px) rotate(0.03deg);letter-spacing:-0.371px;-webkit-text-stroke:0.1px;">7 KB</span>
<span style="top:337px;left:23px;color:#000;transform:translate(0.00px,0.11px) rotate(0.03deg);letter-spacing:-0.119px;">dd_vcredist_x86_20221017091611.log</span>
<span style="top:337px;left:181px;color:#6a6a6a;transform:translate(0.70px,0.11px) rotate(0.03deg);letter-spacing:0.000px;-webkit-text-stroke:0.1px;">10/17/2022 9:16 AM</span>
<span style="top:337px;left:276px;color:#6a6a6a;transform:translate(0.70px,0.11px) rotate(0.03deg);letter-spacing:0.049px;-webkit-text-stroke:0.1px;">Text Document</span>
<span style="top:337px;left:384px;color:#6a6a6a;transform:translate(0.21px,0.11px) rotate(0.03deg);letter-spacing:-0.371px;-webkit-text-stroke:0.1px;">7 KB</span>
<span style="top:350px;left:23px;color:#000;transform:translate(0.00px,0.98px) rotate(0.03deg);letter-spacing:-0.136px;">dd_vcredist_x86_20221018091856.log</span>
<span style="top:350px;left:181px;color:#6a6a6a;transform:translate(0.70px,0.98px) rotate(0.03deg);letter-spacing:0.000px;-webkit-text-stroke:0.1px;">10/18/2022 9:18 AM</span>
<span style="top:350px;left:276px;color:#6a6a6a;transform:translate(0.70px,0.98px) rotate(0.03deg);letter-spacing:0.049px;-webkit-text-stroke:0.1px;">Text Document</span>
<span style="top:350px;left:384px;color:#6a6a6a;transform:translate(0.21px,0.98px) rotate(0.03deg);letter-spacing:-0.371px;-webkit-text-stroke:0.1px;">7 KB</span>
<span style="top:364px;left:23px;color:#000;transform:translate(0.00px,0.85px) rotate(0.03deg);letter-spacing:-0.136px;">dd_vcredist_x86_20221019091038.log</span>
<span style="top:364px;left:181px;color:#6a6a6a;transform:translate(0.70px,0.85px) rotate(0.03deg);letter-spacing:0.000px;-webkit-text-stroke:0.1px;">10/19/2022 9:10 AM</span>
<span style="top:364px;left:276px;color:#6a6a6a;transform:translate(0.70px,0.85px) rotate(0.03deg);letter-spacing:0.049px;-webkit-text-stroke:0.1px;">Text Document</span>
<span style="top:364px;left:384px;color:#6a6a6a;transform:translate(0.21px,0.85px) rotate(0.03deg);letter-spacing:-0.371px;-webkit-text-stroke:0.1px;">7 KB</span>
<span style="top:378px;left:23px;color:#000;transform:translate(0.00px,0.72px) rotate(0.03deg);letter-spacing:-0.136px;">dd_vcredist_x86_20221020092645.log</span>
<span style="top:378px;left:181px;color:#6a6a6a;transform:translate(0.70px,0.72px) rotate(0.03deg);letter-spacing:0.000px;-webkit-text-stroke:0.1px;">10/20/2022 9:26 AM</span>
<span style="top:378px;left:276px;color:#6a6a6a;transform:translate(0.70px,0.72px) rotate(0.03deg);letter-spacing:0.049px;-webkit-text-stroke:0.1px;">Text Document</span>
<span style="top:378px;left:384px;color:#6a6a6a;transform:translate(0.21px,0.72px) rotate(0.03deg);letter-spacing:-0.371px;-webkit-text-stroke:0.1px;">7 KB</span>
<span style="top:392px;left:23px;color:#000;transform:translate(0.00px,0.60px) rotate(0.03deg);letter-spacing:-0.136px;">dd_vcredist_x86_20221021092012.log</span>
<span style="top:392px;left:181px;color:#6a6a6a;transform:translate(0.70px,0.60px) rotate(0.03deg);letter-spacing:0.000px;-webkit-text-stroke:0.1px;">10/21/2022 9:20 AM</span>
<span style="top:392px;left:276px;color:#6a6a6a;transform:translate(0.70px,0.60px) rotate(0.03deg);letter-spacing:0.049px;-webkit-text-stroke:0.1px;">Text Document</span>
<span style="top:392px;left:384px;color:#6a6a6a;transform:translate(0.21px,0.60px) rotate(0.03deg);letter-spacing:-0.371px;-webkit-text-stroke:0.1px;">7 KB</span>
<span style="top:406px;left:23px;color:#000;transform:translate(0.00px,0.47px) rotate(0.03deg);letter-spacing:-0.136px;">dd_vcredist_x86_20221024091218.log</span>
<span style="top:406px;left:181px;color:#6a6a6a;transform:translate(0.70px,0.47px) rotate(0.03deg);letter-spacing:0.000px;-webkit-text-stroke:0.1px;">10/24/2022 9:12 AM</span>
<span style="top:406px;left:276px;color:#6a6a6a;transform:translate(0.70px,0.47px) rotate(0.03deg);letter-spacing:0.049px;-webkit-text-stroke:0.1px;">Text Document</span>
<span style="top:406px;left:384px;color:#6a6a6a;transform:translate(0.21px,0.47px) rotate(0.03deg);letter-spacing:-0.371px;-webkit-text-stroke:0.1px;">7 KB</span>
<span style="top:420px;left:23px;color:#000;transform:translate(0.00px,0.34px) rotate(0.03deg);letter-spacing:-0.136px;">dd_vcredist_x86_20221025092737.log</span>
<span style="top:420px;left:181px;color:#6a6a6a;transform:translate(0.70px,0.34px) rotate(0.03deg);letter-spacing:0.000px;-webkit-text-stroke:0.1px;">10/25/2022 9:27 AM</span>
<span style="top:420px;left:276px;color:#6a6a6a;transform:translate(0.70px,0.34px) rotate(0.03deg);letter-spacing:0.049px;-webkit-text-stroke:0.1px;">Text Document</span>
<span style="top:420px;left:384px;color:#6a6a6a;transform:translate(0.21px,0.34px) rotate(0.03deg);letter-spacing:-0.371px;-webkit-text-stroke:0.1px;">7 KB</span>
<span style="top:434px;left:23px;color:#000;transform:translate(0.00px,0.21px) rotate(0.03deg);letter-spacing:-0.136px;">dd_vcredist_x86_20221026092618.log</span>
<span style="top:434px;left:181px;color:#6a6a6a;transform:translate(0.70px,0.21px) rotate(0.03deg);letter-spacing:0.000px;-webkit-text-stroke:0.1px;">10/26/2022 9:26 AM</span>
<span style="top:434px;left:276px;color:#6a6a6a;transform:translate(0.70px,0.21px) rotate(0.03deg);letter-spacing:0.049px;-webkit-text-stroke:0.1px;">Text Document</span>
<span style="top:434px;left:384px;color:#6a6a6a;transform:translate(0.21px,0.21px) rotate(0.03deg);letter-spacing:-0.371px;-webkit-text-stroke:0.1px;">7 KB</span>
<span style="top:448px;left:23px;color:#000;transform:translate(0.00px,0.08px) rotate(0.03deg);letter-spacing:-0.136px;">dd_vcredist_x86_20221027091935.log</span>
<span style="top:448px;left:181px;color:#6a6a6a;transform:translate(0.70px,0.08px) rotate(0.03deg);letter-spacing:0.000px;-webkit-text-stroke:0.1px;">10/27/2022 9:19 AM</span>
<span style="top:448px;left:276px;color:#6a6a6a;transform:translate(0.70px,0.08px) rotate(0.03deg);letter-spacing:0.049px;-webkit-text-stroke:0.1px;">Text Document</span>
<span style="top:448px;left:384px;color:#6a6a6a;transform:translate(0.21px,0.08px) rotate(0.03deg);letter-spacing:-0.371px;-webkit-text-stroke:0.1px;">7 KB</span>
<span style="top:461px;left:23px;color:#000;transform:translate(0.00px,0.96px) rotate(0.03deg);letter-spacing:-0.136px;">dd_vcredist_x86_20221028091454.log</span>
<span style="top:461px;left:181px;color:#6a6a6a;transform:translate(0.70px,0.96px) rotate(0.03deg);letter-spacing:0.000px;-webkit-text-stroke:0.1px;">10/28/2022 9:14 AM</span>
<span style="top:461px;left:276px;color:#6a6a6a;transform:translate(0.70px,0.96px) rotate(0.03deg);letter-spacing:0.049px;-webkit-text-stroke:0.1px;">Text Document</span>
<span style="top:461px;left:384px;color:#6a6a6a;transform:translate(0.21px,0.96px) rotate(0.03deg);letter-spacing:-0.371px;-webkit-text-stroke:0.1px;">7 KB</span>
<span style="top:475px;left:23px;color:#000;transform:translate(0.00px,0.83px) rotate(0.03deg);letter-spacing:-0.136px;">dd_vcredist_x86_20221031092130.log</span>
<span style="top:475px;left:181px;color:#6a6a6a;transform:translate(0.70px,0.83px) rotate(0.03deg);letter-spacing:0.000px;-webkit-text-stroke:0.1px;">10/31/2022 9:21 AM</span>
<span style="top:475px;left:276px;color:#6a6a6a;transform:translate(0.70px,0.83px) rotate(0.03deg);letter-spacing:0.049px;-webkit-text-stroke:0.1px;">Text Document</span>
<span style="top:475px;left:384px;color:#6a6a6a;transform:translate(0.21px,0.83px) rotate(0.03deg);letter-spacing:-0.371px;-webkit-text-stroke:0.1px;">7 KB</span>
<span style="top:489px;left:23px;color:#000;transform:translate(0.00px,0.70px) rotate(0.03deg);letter-spacing:-0.119px;">dd_vcredist_x86_20221101091007.log</span>
<span style="top:489px;left:181px;color:#6a6a6a;transform:translate(0.70px,0.70px) rotate(0.03deg);letter-spacing:0.041px;-webkit-text-stroke:0.1px;">11/1/2022 9:10 AM</span>
<span style="top:489px;left:276px;color:#6a6a6a;transform:translate(0.70px,0.70px) rotate(0.03deg);letter-spacing:0.049px;-webkit-text-stroke:0.1px;">Text Document</span>
<span style="top:489px;left:384px;color:#6a6a6a;transform:translate(0.21px,0.70px) rotate(0.03deg);letter-spacing:-0.371px;-webkit-text-stroke:0.1px;">7 KB</span>
<span style="top:503px;left:23px;color:#000;transform:translate(0.00px,0.57px) rotate(0.03deg);letter-spacing:-0.119px;">dd_vcredist_x86_20221102124155.log</span>
<span style="top:503px;left:181px;color:#6a6a6a;transform:translate(0.70px,0.57px) rotate(0.03deg);letter-spacing:-0.031px;-webkit-text-stroke:0.1px;">11/2/2022 12:41 PM</span>
<span style="top:503px;left:276px;color:#6a6a6a;transform:translate(0.70px,0.57px) rotate(0.03deg);letter-spacing:0.049px;-webkit-text-stroke:0.1px;">Text Document</span>
<span style="top:503px;left:384px;color:#6a6a6a;transform:translate(0.21px,0.57px) rotate(0.03deg);letter-spacing:-0.371px;-webkit-text-stroke:0.1px;">7 KB</span>
<span style="top:517px;left:23px;color:#000;transform:translate(0.00px,0.44px) rotate(0.03deg);letter-spacing:-0.119px;">dd_vcredist_x86_20221103091319.log</span>
<span style="top:517px;left:181px;color:#6a6a6a;transform:translate(0.70px,0.44px) rotate(0.03deg);letter-spacing:0.041px;-webkit-text-stroke:0.1px;">11/3/2022 9:13 AM</span>
<span style="top:517px;left:276px;color:#6a6a6a;transform:translate(0.70px,0.44px) rotate(0.03deg);letter-spacing:0.049px;-webkit-text-stroke:0.1px;">Text Document</span>
<span style="top:517px;left:384px;color:#6a6a6a;transform:translate(0.21px,0.44px) rotate(0.03deg);letter-spacing:-0.371px;-webkit-text-stroke:0.1px;">7 KB</span>
<span style="top:531px;left:23px;color:#000;transform:translate(0.00px,0.32px) rotate(0.03deg);letter-spacing:-0.119px;">dd_vcredist_x86_20221104091036.log</span>
<span style="top:531px;left:181px;color:#6a6a6a;transform:translate(0.70px,0.32px) rotate(0.03deg);letter-spacing:0.041px;-webkit-text-stroke:0.1px;">11/4/2022 9:10 AM</span>
<span style="top:531px;left:276px;color:#6a6a6a;transform:translate(0.70px,0.32px) rotate(0.03deg);letter-spacing:0.049px;-webkit-text-stroke:0.1px;">Text Document</span>
<span style="top:531px;left:384px;color:#6a6a6a;transform:translate(0.21px,0.32px) rotate(0.03deg);letter-spacing:-0.371px;-webkit-text-stroke:0.1px;">7 KB</span>
<span style="top:548px;left:7px;color:#33425a;transform:translate(0.30px,0.70px) rotate(0.03deg);letter-spacing:-0.038px;">467 items</span>
<span style="top:548px;left:54px;color:#33425a;transform:translate(0.00px,0.70px) rotate(0.03deg);letter-spacing:0.015px;">467 items selected</span>
</div></body></html>
